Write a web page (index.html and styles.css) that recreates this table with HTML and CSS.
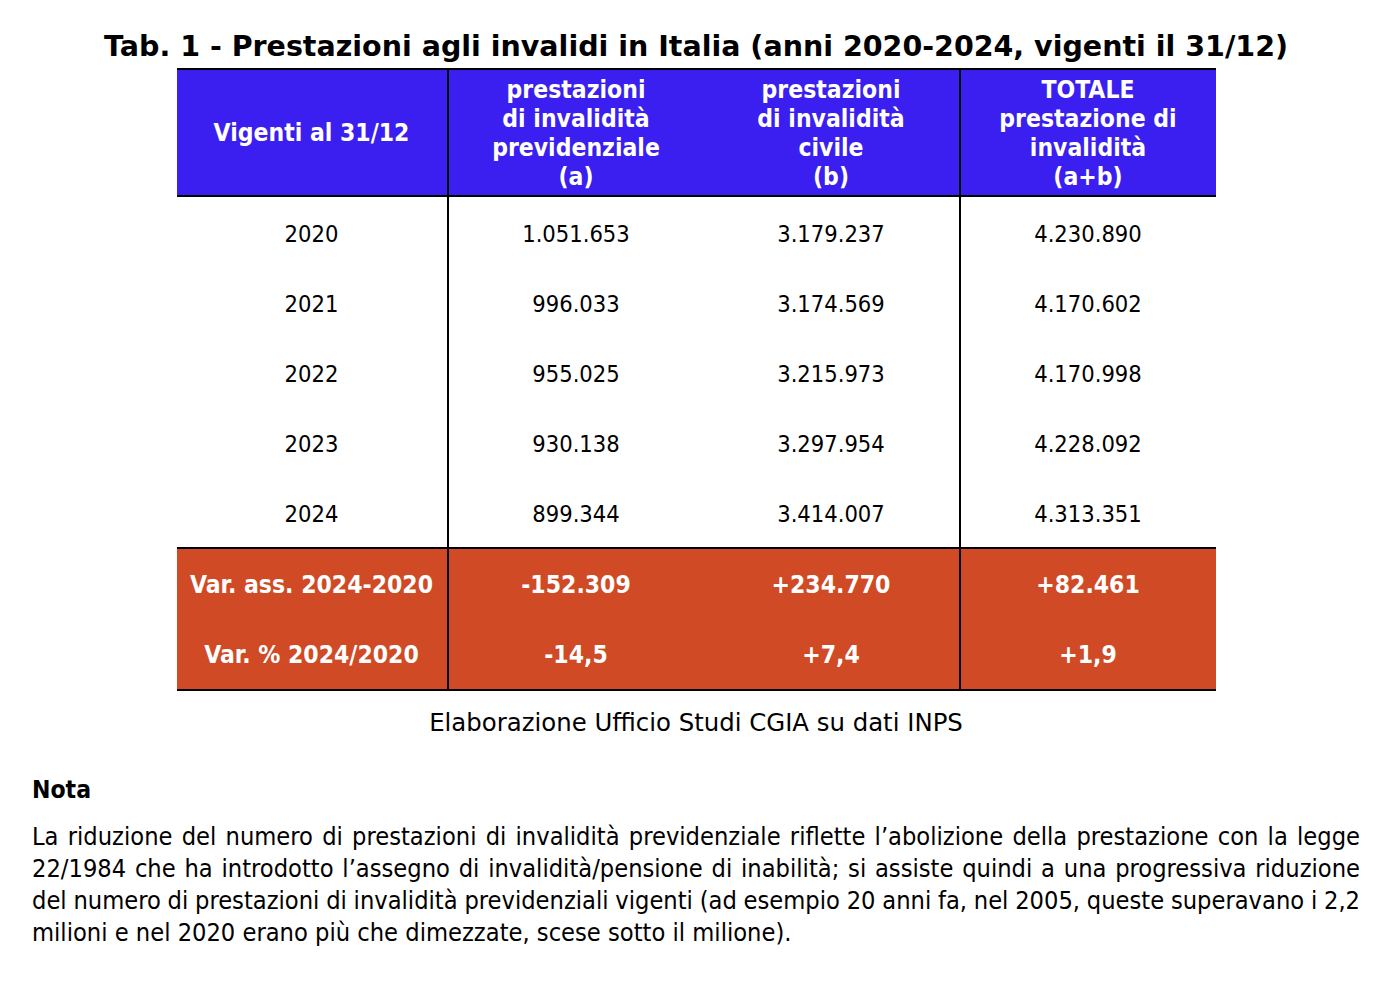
FILE: index.html
```html
<!DOCTYPE html>
<html lang="it">
<head>
<meta charset="utf-8">
<title>Tab. 1 - Prestazioni agli invalidi in Italia</title>
<link rel="stylesheet" href="styles.css">
</head>
<body>
<main class="page">
  <h1 class="title">Tab. 1 - Prestazioni agli invalidi in Italia (anni 2020-2024, vigenti il 31/12)</h1>
  <table class="tab">
    <colgroup>
      <col class="w1"><col class="w2"><col class="w3"><col class="w4">
    </colgroup>
    <thead>
      <tr>
        <th class="c1">Vigenti al 31/12</th>
        <th class="c2">prestazioni<br>di invalidità<br>previdenziale<br>(a)</th>
        <th class="c3">prestazioni<br>di invalidità<br>civile<br>(b)</th>
        <th class="c4">TOTALE<br>prestazione di<br>invalidità<br>(a+b)</th>
      </tr>
    </thead>
    <tbody>
      <tr><td class="c1">2020</td><td class="c2">1.051.653</td><td class="c3">3.179.237</td><td class="c4">4.230.890</td></tr>
      <tr><td class="c1">2021</td><td class="c2">996.033</td><td class="c3">3.174.569</td><td class="c4">4.170.602</td></tr>
      <tr><td class="c1">2022</td><td class="c2">955.025</td><td class="c3">3.215.973</td><td class="c4">4.170.998</td></tr>
      <tr><td class="c1">2023</td><td class="c2">930.138</td><td class="c3">3.297.954</td><td class="c4">4.228.092</td></tr>
      <tr class="last"><td class="c1">2024</td><td class="c2">899.344</td><td class="c3">3.414.007</td><td class="c4">4.313.351</td></tr>
    </tbody>
    <tfoot>
      <tr><td class="c1">Var. ass. 2024-2020</td><td class="c2">-152.309</td><td class="c3">+234.770</td><td class="c4">+82.461</td></tr>
      <tr class="last"><td class="c1">Var. % 2024/2020</td><td class="c2">-14,5</td><td class="c3">+7,4</td><td class="c4">+1,9</td></tr>
    </tfoot>
  </table>
  <p class="source">Elaborazione Ufficio Studi CGIA su dati INPS</p>
  <h2 class="nota">Nota</h2>
  <p class="text">
    <span class="line">La riduzione del numero di prestazioni di invalidità previdenziale riflette l’abolizione della prestazione con la legge</span>
    <span class="line">22/1984 che ha introdotto l’assegno di invalidità/pensione di inabilità; si assiste quindi a una progressiva riduzione</span>
    <span class="line">del numero di prestazioni di invalidità previdenziali vigenti (ad esempio 20 anni fa, nel 2005, queste superavano i 2,2</span>
    <span class="line end">milioni e nel 2020 erano più che dimezzate, scese sotto il milione).</span>
  </p>
</main>
</body>
</html>
```

FILE: styles.css
```css
html, body {
  margin: 0;
  padding: 0;
  background: #ffffff;
  color: #000000;
}

body {
  font-family: "DejaVu Sans Condensed", "DejaVu Sans", sans-serif;
  font-stretch: condensed;
}

.page {
  width: 1328px;
  margin: 0 0 0 32px;
  padding-top: 32px;
}

.title {
  margin: 0 0 6px 0;
  font-family: "DejaVu Sans", sans-serif;
  font-stretch: normal;
  font-weight: bold;
  font-size: 28.5px;
  line-height: 30px;
  text-align: center;
  white-space: nowrap;
}

.tab {
  margin: 0 auto;
  width: 1039px;
  table-layout: fixed;
  border-collapse: collapse;
  font-size: 23.5px;
}

.w1 { width: 271px; }
.w2 { width: 256px; }
.w3 { width: 256px; }
.w4 { width: 256px; }

.tab th,
.tab td {
  padding: 0;
  text-align: center;
  vertical-align: middle;
}

.tab .c1,
.tab .c3 {
  border-right: 2px solid #000;
}

.tab thead th {
  height: 125px;
  background: #3b1ef0;
  color: #ffffff;
  font-weight: bold;
  font-size: 24.5px;
  line-height: 29px;
  border-top: 2px solid #000;
  border-bottom: 2px solid #000;
}

.tab tbody td {
  height: 66px;
  padding-top: 4px;
}

.tab tbody tr.last td {
  border-bottom: 2px solid #000;
}

.tab tfoot td {
  height: 70px;
  padding-top: 0;
  background: #cf4a25;
  color: #ffffff;
  font-weight: bold;
  font-size: 24.5px;
}

.tab tfoot tr.last td {
  border-bottom: 2px solid #000;
}

.source {
  margin: 17px 0 0 0;
  font-family: "DejaVu Sans", sans-serif;
  font-stretch: normal;
  font-size: 24.4px;
  line-height: 30px;
  text-align: center;
}

.nota {
  margin: 37px 0 0 0;
  font-size: 24.5px;
  line-height: 30px;
  font-weight: bold;
}

.text {
  margin: 16px 0 0 0;
  font-size: 25.2px;
  line-height: 32px;
}

.line {
  display: block;
  text-align: justify;
  text-align-last: justify;
  word-spacing: -4px;
}

.line.end {
  text-align-last: left;
  word-spacing: normal;
}
```
